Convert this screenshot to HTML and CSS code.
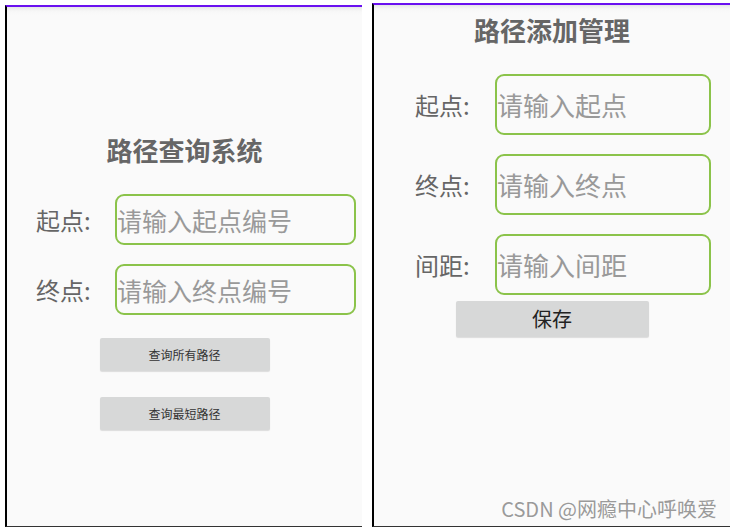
FILE: index.html
```html
<!DOCTYPE html>
<html lang="zh">
<head>
<meta charset="utf-8">
<title>路径</title>
<link rel="stylesheet" href="styles.css">
</head>
<body>
<div class="screens">
  <section class="phone phone-query">
    <h1 class="title">路径查询系统</h1>
    <div class="form-row">
      <label class="label">起点:</label>
      <input class="field" type="text" placeholder="请输入起点编号">
    </div>
    <div class="form-row">
      <label class="label">终点:</label>
      <input class="field" type="text" placeholder="请输入终点编号">
    </div>
    <button class="btn btn-small btn-first">查询所有路径</button>
    <button class="btn btn-small btn-second">查询最短路径</button>
  </section>
  <section class="phone phone-add">
    <h1 class="title">路径添加管理</h1>
    <div class="form-row">
      <label class="label">起点:</label>
      <input class="field" type="text" placeholder="请输入起点">
    </div>
    <div class="form-row">
      <label class="label">终点:</label>
      <input class="field" type="text" placeholder="请输入终点">
    </div>
    <div class="form-row">
      <label class="label">间距:</label>
      <input class="field" type="text" placeholder="请输入间距">
    </div>
    <button class="btn btn-save">保存</button>
    <div class="watermark">CSDN @网瘾中心呼唤爱</div>
  </section>
</div>
</body>
</html>
```
FILE: styles.css
```css
* { box-sizing: border-box; }
html, body {
  margin: 0;
  padding: 0;
  background: #ffffff;
  font-family: "Noto Sans CJK SC", "Noto Sans", sans-serif;
}
.screens {
  display: flex;
  align-items: flex-start;
}
.phone {
  position: relative;
  display: flex;
  flex-direction: column;
  background: linear-gradient(#e6e6e6, #f7f7f7 4px, #fafafa 8px);
  border-left: 2px solid #000;
  border-bottom: 1px solid #333;
}
.phone-query {
  margin-left: 5px;
  margin-top: 5px;
  width: 357px;
  height: 522px;
  border-top: 2px solid #6a10f0;
  padding-top: 128px;
}
.phone-add {
  margin-left: 10px;
  margin-top: 3px;
  width: 358px;
  height: 524px;
  border-top: 2px solid #6a10f0;
  padding-top: 10px;
  box-shadow: 0 1px 0 #aaa;
}
.title {
  margin: 0;
  text-align: center;
  font-size: 26px;
  line-height: 30px;
  font-weight: 700;
  color: #666;
}
.form-row {
  display: flex;
  align-items: center;
}
.label {
  flex: none;
  font-size: 24px;
  color: #666;
}
.field {
  flex: 1;
  min-width: 0;
  border: 2px solid #8bc34a;
  border-radius: 9px;
  background: transparent;
  padding: 0;
  margin: 0;
  outline: none;
  font-family: "Noto Sans CJK SC", sans-serif;
  color: #444;
}
.field::placeholder {
  color: #999;
  opacity: 1;
}
.phone-query .form-row { margin-top: 19px; padding-left: 29px; padding-right: 6px; }
.phone-query .form-row:first-of-type { margin-top: 29px; }
.phone-query .label { width: 79px; }
.phone-query .field { height: 51px; font-size: 25px; }

.phone-add .form-row { margin-top: 19px; padding-left: 41px; padding-right: 19px; }
.phone-add .title + .form-row { margin-top: 29px; }
.phone-add .label { width: 80px; }
.phone-add .field { height: 61px; font-size: 26px; }

.btn {
  align-self: center;
  border: none;
  border-radius: 2px;
  background: #d7d8d8;
  box-shadow: 0 1px 1px rgba(0,0,0,0.12);
  font-family: "Noto Sans CJK SC", sans-serif;
  padding: 0;
}
.btn-small {
  width: 170px;
  height: 33px;
  font-size: 12px;
  color: #333;
}
.btn-first { margin-top: 23px; }
.btn-second { margin-top: 26px; }
.btn-save {
  margin-top: 6px;
  width: 193px;
  height: 36px;
  font-size: 20px;
  line-height: 32px;
  color: #222;
}
.watermark {
  position: absolute;
  right: 13px;
  bottom: 3px;
  font-size: 20px;
  color: #9a9a9a;
  text-shadow: 0 0 2px #fff;
  white-space: nowrap;
}
```
